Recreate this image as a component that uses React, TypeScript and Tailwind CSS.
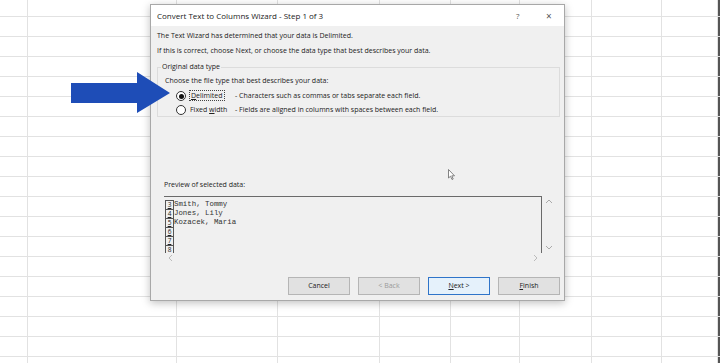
import React from "react";

const colWidths = [28, 149, 101, 102, 71, 69, 72, 70, 56];

function Grid() {
  const rows = [];
  for (let r = 0; r < 19; r++) {
    rows.push(
      <div
        key={r}
        className={`flex border-b border-[#e2e2e2] ${r === 0 ? "h-[17px]" : "h-[20px]"}`}
      >
        {colWidths.map((w, i) => (
          <div key={i} style={{ width: w }} className="shrink-0 border-r border-[#e2e2e2]" />
        ))}
        <div className="w-[2px] bg-[#555]" />
      </div>
    );
  }
  return <div className="flex flex-col">{rows}</div>;
}

function Radio({ checked }: { checked?: boolean }) {
  return (
    <span className="w-[10px] h-[10px] rounded-full border border-[#333] bg-white flex items-center justify-center shrink-0">
      {checked && <span className="w-[5px] h-[5px] rounded-full bg-[#111]" />}
    </span>
  );
}

function Btn({ children, primary, disabled }: { children: React.ReactNode; primary?: boolean; disabled?: boolean }) {
  return (
    <div
      className={`w-[62px] h-[18px] flex items-center justify-center text-[7px] border ${
        primary ? "border-[#2f74c9] bg-[#e5f1fb]" : "border-[#b5b5b5] bg-[#e1e1e1]"
      } ${disabled ? "text-[#9a9a9a]" : "text-[#222]"}`}
    >
      {children}
    </div>
  );
}

export default function App() {
  const rows = [
    ["3", "Smith, Tommy"],
    ["4", "Jones, Lily"],
    ["5", "Kozacek, Maria"],
    ["6", ""],
    ["7", ""],
    ["8", ""],
  ];
  return (
    <div
      className="relative w-[720px] h-[363px] overflow-hidden bg-white"
      style={{ fontFamily: '"Open Sans", "Liberation Sans", sans-serif' }}
    >
      <Grid />

      {/* Dialog */}
      <div className="absolute left-[150px] top-[4px] w-[415px] h-[297px] bg-[#f0f0f0] border border-[#a8a8a8] shadow-[0_2px_8px_rgba(0,0,0,0.25)] flex flex-col text-[#222]">
        <div className="h-[21px] bg-white flex items-center pl-[6px] text-[8px] relative">
          <span>Convert Text to Columns Wizard - Step 1 of 3</span>
          <span className="absolute left-[365px] text-[8px] text-[#555]">?</span>
          <span className="absolute left-[395px] text-[10px] text-[#555] leading-none">×</span>
        </div>
        <div className="flex flex-col px-[6px] text-[7px]">
          <div className="mt-[4px] h-[12px] leading-[12px]">The Text Wizard has determined that your data is Delimited.</div>
          <div className="mt-[3px] h-[12px] leading-[12px]">If this is correct, choose Next, or choose the data type that best describes your data.</div>
          <fieldset className="mt-[5px] mr-[0px] w-[403px] h-[55px] border border-[#dcdcdc] pl-[7px] pr-[4px]">
            <legend className="px-[1px] ml-[-4px] leading-[10px]">Original data type</legend>
            <div className="mt-[4px] leading-[10px]">Choose the file type that best describes your data:</div>
            <div className="mt-[3px] flex items-center h-[14px] pl-[11px]">
              <Radio checked />
              <span className="ml-[3px] w-[46px]">
                <span className="border border-dotted border-[#444] px-[1px] leading-[9px]"><u>D</u>elimited</span>
              </span>
              <span>- Characters such as commas or tabs separate each field.</span>
            </div>
            <div className="flex items-center h-[14px] pl-[11px]">
              <Radio />
              <span className="ml-[4px] w-[45px]">
                Fixed <u>w</u>idth
              </span>
              <span>- Fields are aligned in columns with spaces between each field.</span>
            </div>
          </fieldset>
          <div className="mt-[63px] ml-[7px] leading-[10px]">Preview of selected data:</div>
          <div className="mt-[6px] ml-[7px] w-[392px] h-[67px] flex flex-col">
            <div className="flex h-[57px]">
              <div className="w-[378px] border-t border-r border-[#6a6a6a] flex flex-col pt-[3px] overflow-hidden">
                {rows.map(([n, t]) => (
                  <div key={n} className="flex h-[9px] items-center">
                    <div className="w-[9px] h-[9px] border border-[#555] border-b-0 text-[6.5px] leading-[8px] text-center ml-[1px]">
                      <u>{n}</u>
                    </div>
                    <span
                      className="text-[7.4px] leading-[9px] text-[#333]"
                      style={{ fontFamily: '"Liberation Mono", monospace' }}
                    >
                      {t}
                    </span>
                  </div>
                ))}
              </div>
              <div className="w-[14px] flex flex-col items-center justify-between py-[3px] text-[#aaa]">
                <svg width="8" height="5" viewBox="0 0 8 5"><path d="M1 4 L4 1 L7 4" stroke="#aaa" fill="none" /></svg>
                <svg width="8" height="5" viewBox="0 0 8 5"><path d="M1 1 L4 4 L7 1" stroke="#aaa" fill="none" /></svg>
              </div>
            </div>
            <div className="h-[10px] w-[378px] flex items-center justify-between px-[4px]">
              <svg width="5" height="8" viewBox="0 0 5 8"><path d="M4 1 L1 4 L4 7" stroke="#bbb" fill="none" /></svg>
              <svg width="5" height="8" viewBox="0 0 5 8"><path d="M1 1 L4 4 L1 7" stroke="#bbb" fill="none" /></svg>
            </div>
          </div>
        </div>
        <div className="mt-[14px] flex justify-end gap-[8px] pr-[4px]">
          <Btn>Cancel</Btn>
          <Btn disabled>&lt; Back</Btn>
          <Btn primary>
            <span>
              <u>N</u>ext &gt;
            </span>
          </Btn>
          <Btn>
            <span>
              <u>F</u>inish
            </span>
          </Btn>
        </div>
      </div>

      {/* Arrow */}
      <svg className="absolute left-[71px] top-[72px]" width="100" height="42" viewBox="0 0 100 42">
        <polygon points="0,11 66,11 66,0 99,21 66,41 66,31 0,31" fill="#1e4db7" />
      </svg>

      {/* Cursor */}
      <svg className="absolute left-[448px] top-[169px]" width="8" height="12" viewBox="0 0 8 12">
        <path d="M0.5 0.5 L0.5 9 L2.5 7.2 L4 10.5 L5.2 10 L3.8 6.8 L6.5 6.8 Z" fill="#fff" stroke="#666" strokeWidth="0.8" />
      </svg>
    </div>
  );
}
